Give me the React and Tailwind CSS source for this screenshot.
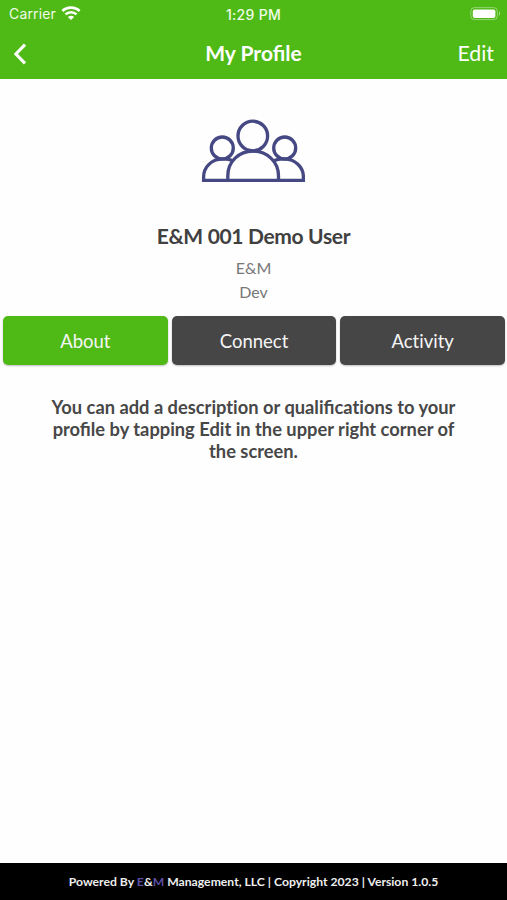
import React, { useState } from "react";

const tabs = ["About", "Connect", "Activity"];

const WifiIcon = () => (
  <svg width="20" height="15" viewBox="0 0 20 15" fill="none" stroke="white" strokeWidth="2.6">
    <path d="M1.4 5C6 .5 14 .5 18.6 5" />
    <path d="M4.5 8.4C7.5 5.5 12.5 5.5 15.5 8.4" />
    <path d="M10 14L6.9 10.9C8.6 9.4 11.4 9.4 13.1 10.9Z" fill="white" stroke="none" />
  </svg>
);

const BatteryIcon = () => (
  <svg width="32" height="14" viewBox="0 0 32 14" fill="none">
    <rect x="0.8" y="0.6" width="26.6" height="12" rx="3.8" stroke="white" strokeOpacity="0.4" />
    <rect x="2.8" y="2.4" width="22.6" height="8.6" rx="2" fill="white" />
    <path d="M29 4.6C30.7 5.3 30.7 8.1 29 8.8Z" fill="white" fillOpacity="0.45" />
  </svg>
);

const GroupIcon = () => (
  <svg width="104" height="64" viewBox="0 0 104 64" fill="none" stroke="#454882" strokeWidth="3.3">
    <circle cx="51.8" cy="17" r="14.8" />
    <circle cx="21.3" cy="29" r="11" />
    <circle cx="83.7" cy="29" r="11" />
    <path d="M26.8 61.4V57C26.8 42.5 38 32.2 51.9 32.2S77.5 42.5 77.5 57V61.4" />
    <path d="M31.5 41.5C28.5 40.2 25 39.7 21.5 39.9C10.5 40.2 2.6 48 2.6 58V61.4H102.4V58C102.4 48 94 40.2 83.5 39.9C80 39.7 76.3 40.2 73.3 41.5" />
  </svg>
);

const App = () => {
  const [activeTab, setActiveTab] = useState("About");

  return (
    <div className="flex h-[900px] w-[507px] flex-col bg-[#fefefe] font-[Lato,sans-serif]">
      {/* Status bar and header */}
      <header className="h-[79px] bg-[#4fba15] text-white">
        <div className="grid h-[27px] grid-cols-3 items-center font-[Inter,sans-serif] text-[14px] text-[#f0fbe8]">
          <div className="flex items-center gap-[5px] pl-[9px] tracking-[0.15px]">
            Carrier
            <WifiIcon />
          </div>
          <span className="pt-px text-center text-[14px] font-medium tracking-[0.3px]">1:29 PM</span>
          <div className="flex justify-end pr-[5px]">
            <BatteryIcon />
          </div>
        </div>
        <div className="grid h-[51px] grid-cols-3 items-center">
          <button className="pt-[2px] pl-[14px]" aria-label="Back">
            <svg width="13" height="22" viewBox="0 0 13 22" fill="none" stroke="white" strokeWidth="3.1">
              <path d="M11 1.6L1.9 11L11 20.4" />
            </svg>
          </button>
          <h1 className="text-center text-[21px] font-bold">My Profile</h1>
          <button className="pt-[2px] pr-[13px] text-right text-[21.3px]">Edit</button>
        </div>
      </header>

      {/* Profile */}
      <main className="flex flex-1 flex-col items-center">
        <div className="mt-10 mr-[2px]">
          <GroupIcon />
        </div>
        <h2 className="mt-[37px] text-[21px] leading-8 font-bold tracking-[-0.33px] text-[#404040]">
          E&amp;M 001 Demo User
        </h2>
        <p className="mt-1 text-center text-base leading-6 text-[#777777]">
          E&amp;M
          <br />
          Dev
        </p>

        {/* Tabs */}
        <div className="mt-3 grid w-full grid-cols-3 gap-1 pr-[2px] pl-[3px]">
          {tabs.map((name) => (
            <button
              key={name}
              onClick={() => setActiveTab(name)}
              className={`h-[49px] rounded-[5px] pt-[3px] text-[18.5px] text-[#f5f5f5] shadow-[0_1px_2px_rgba(0,0,0,0.25)] [font-variant-ligatures:none] ${
                activeTab === name ? "bg-[#4fba15]" : "bg-[#464647]"
              }`}
            >
              {name}
            </button>
          ))}
        </div>

        <p className="mt-[31px] w-[430px] text-center text-[18.3px] leading-[22px] font-bold text-[#474747]">
          You can add a <span className="[font-variant-ligatures:none]">description</span> or qualifi
          <span className="[font-variant-ligatures:none]">cations</span> to your
          <br />
          profile by tapping Edit in the upper right corner of
          <br />
          the screen.
        </p>
      </main>

      {/* Footer */}
      <footer className="flex h-[37px] items-center justify-center bg-black pt-[2px] text-[12.2px] font-bold whitespace-pre text-[#eeeeee]">
        Powered By <span className="text-[#5b4fa3]">E</span>&amp;<span className="text-[#5b4fa3]">M</span> Management,
        LLC | Copyright 2023 | Version 1.0.5
      </footer>
    </div>
  );
};

export default App;
